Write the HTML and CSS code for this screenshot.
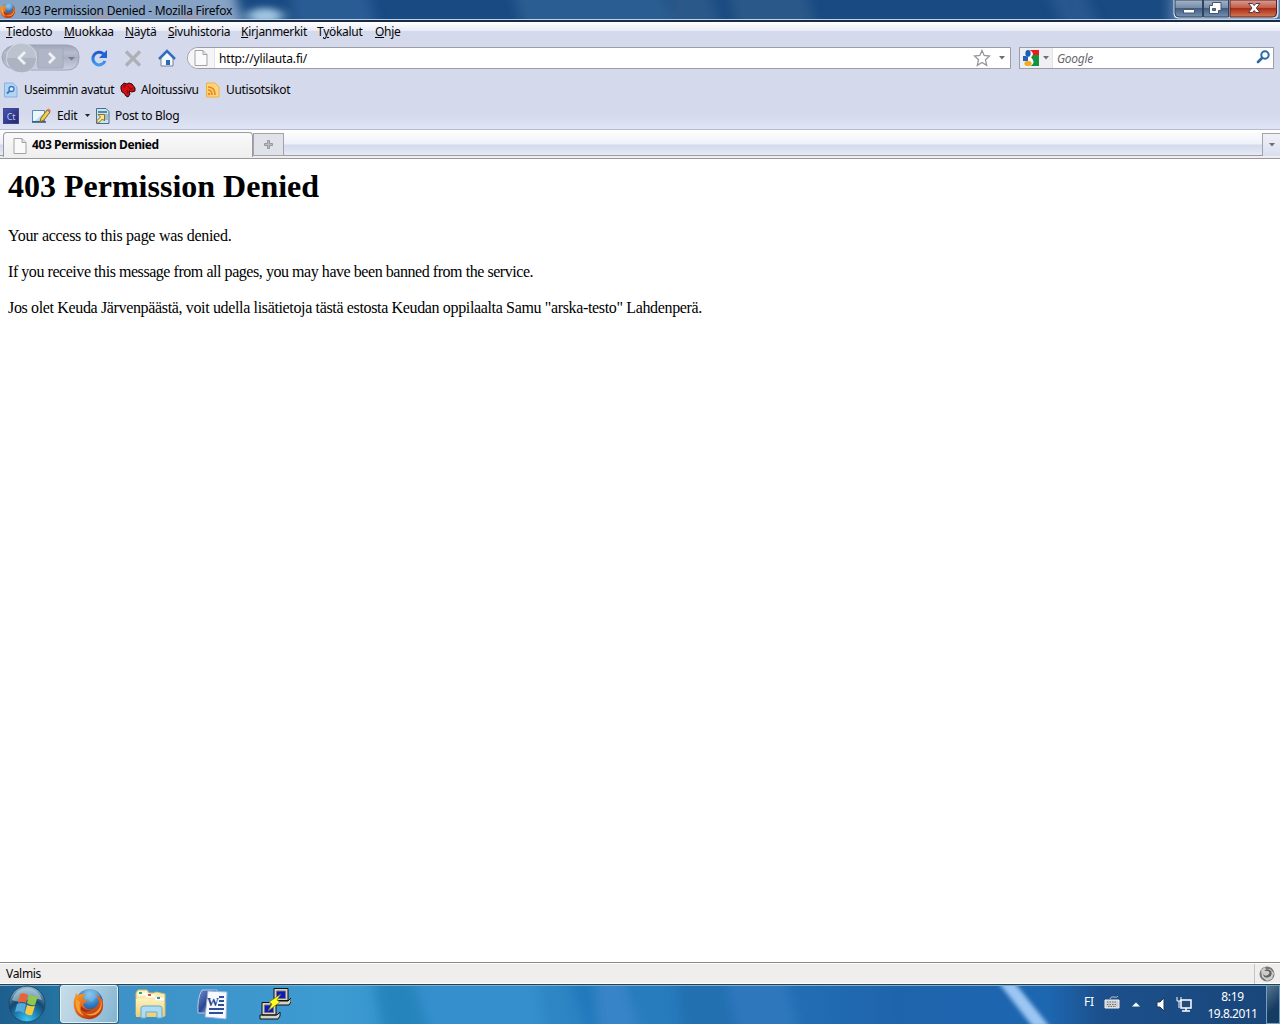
FILE: index.html
```html
<!DOCTYPE html>
<html lang="fi">
<head>
<meta charset="utf-8">
<title>403 Permission Denied - Mozilla Firefox</title>
<link rel="stylesheet" href="styles.css">
</head>
<body>
<svg width="0" height="0" class="defs">
  <defs>
    <linearGradient id="fox" x1="0" y1="0" x2="0.6" y2="1"><stop offset="0" stop-color="#f9a32b"/><stop offset=".5" stop-color="#e8681b"/><stop offset="1" stop-color="#b83510"/></linearGradient>
    <radialGradient id="globe" cx=".5" cy=".2" r=".8"><stop offset="0" stop-color="#9bd4f4"/><stop offset=".5" stop-color="#2f7cc4"/><stop offset="1" stop-color="#15346f"/></radialGradient>
    <linearGradient id="blue" x1="0" y1="0" x2="0" y2="1"><stop offset="0" stop-color="#1c5bcd"/><stop offset="1" stop-color="#3f9bf0"/></linearGradient>
    <linearGradient id="silver" x1="0" y1="0" x2="0" y2="1"><stop offset="0" stop-color="#9da5ba"/><stop offset=".3" stop-color="#b7bdce"/><stop offset=".5" stop-color="#aab1c3"/><stop offset="1" stop-color="#ccd2e2"/></linearGradient>
    <radialGradient id="orb" cx=".5" cy=".95" r=".9"><stop offset="0" stop-color="#38c8f4"/><stop offset=".4" stop-color="#1c79ac"/><stop offset=".65" stop-color="#15496f"/><stop offset="1" stop-color="#7eafc9"/></radialGradient>
    <linearGradient id="folder" x1="0" y1="0" x2="0" y2="1"><stop offset="0" stop-color="#fff3bd"/><stop offset="1" stop-color="#e9cd76"/></linearGradient>
    <linearGradient id="wave" x1="0" y1="0" x2="1" y2="1"><stop offset="0" stop-color="#7890d0"/><stop offset=".5" stop-color="#29468f"/><stop offset="1" stop-color="#d9e5fa"/></linearGradient>
    <symbol id="firefox" viewBox="0 0 32 32">
      <circle cx="16.5" cy="14.5" r="13.5" fill="url(#globe)"/>
      <path d="M13 4q5-3 10-1l4 5-5 2-3 4-4-3-3 1-2-3z" fill="#78b9e5" opacity=".5"/>
      <path d="M3 5Q4 7 6 7q3-2 7-1-4 3-3 5l4 1q0 2-4 4 2 6 7 5 5 1 9-6-1-6-4-9 5 2 6 6l1-2q3 10-2 16-5 6-13 5Q3 30 1 19 0 13 2 9z" fill="url(#fox)"/>
      <path d="M3 11Q1 24 11 28q-6-6-4-14zM27 9q3 9-3 14-5 4-12 3 8 4 14-2 5-6 1-15z" fill="#f6a033"/>
      <path d="M8 18q6 6 11 3-5 6-11 1z" fill="#a43112"/>
    </symbol>
    <symbol id="page" viewBox="0 0 14 16"><path d="M1 .5h8l4 4V15.500H1z" fill="#fafafa" stroke="#a2a2a2"/><path d="M9 .5v4h4" fill="#e4e4e4" stroke="#a2a2a2"/></symbol>
    <symbol id="arrow" viewBox="0 0 6 4"><path d="M0 0h6L3 3.500z" fill="#6d6f76"/></symbol>
  </defs>
</svg>

<header class="titlebar">
  <svg class="wallpaper" viewBox="0 0 1280 20" preserveAspectRatio="none">
    <defs><filter id="soft" x="-20%" y="-80%" width="140%" height="260%"><feGaussianBlur stdDeviation="6 3"/></filter></defs>
    <rect width="1280" height="20" fill="#194a82"/>
    <g filter="url(#soft)">
      <path d="M-30-15H232L246 35H-30z" fill="#86a3c5"/><ellipse cx="265" cy="16" rx="18" ry="8" fill="#9fc4e0"/>
      <path d="M290-15h75l15 50h-85z" fill="#2a5b94"/><path d="M510-15h150l20 50H525z" fill="#2c5d91"/><path d="M667-15h40l17 50h-47zM727-15h75l18 50h-82z" fill="#2a5988"/><path d="M1045-15h35l25 50h-40z" fill="#28578e"/><path d="M1170-15h140v50h-140z" fill="#587da8"/>
      <path d="M94 20q6-8 18 0zM182 20q8-8 18 0z" fill="#cf866b"/>
    </g>
  </svg>
  <svg class="logo-small"><use href="#firefox"/></svg>
  <span class="title">403 Permission Denied - Mozilla Firefox</span>
  <svg class="controls" viewBox="0 0 106 21">
    <defs><linearGradient id="cb" x1="0" y1="0" x2="0" y2="1"><stop offset="0" stop-color="#a6b6cb"/><stop offset=".46" stop-color="#758ca9"/><stop offset=".48" stop-color="#3f5c80"/><stop offset="1" stop-color="#7693b4"/></linearGradient><linearGradient id="cr" x1="0" y1="0" x2="0" y2="1"><stop offset="0" stop-color="#d8a092"/><stop offset=".46" stop-color="#c25b48"/><stop offset=".48" stop-color="#a82a15"/><stop offset="1" stop-color="#d47b57"/></linearGradient></defs>
    <path d="M1 0v14q0 4 4 4h97q3 0 3-4V0z" fill="#b8cadd" stroke="#dce7f2"/>
    <path d="M2 0h27.500v17H6q-4 0-4-4zM30.500 0h25v17h-25z" fill="url(#cb)" stroke="#30435e"/>
    <path d="M57 0h46.500v13q0 4-4 4H57z" fill="url(#cr)" stroke="#54232a"/>
    <path d="M10.500 9.500h11v3.500h-11z" fill="#fff" stroke="#48576d"/>
    <path d="M39.500 2.500h8.500v8h-2.500v3h-9v-8h3z" fill="#fff" stroke="#46546a"/><path d="M39.500 8.500h3v2h-3z" fill="#67809e" stroke="#46546a"/>
    <path d="M75.500 3.500h4l1.700 2 1.700-2h4l-3.500 4.500 3.500 4.500h-4l-1.700-2-1.700 2h-4L79 8z" fill="#fff" stroke="#573442"/>
  </svg>
</header>

<nav class="menubar">
  <span class="m1"><u>T</u>iedosto</span><span class="m2"><u>M</u>uokkaa</span><span class="m3"><u>N</u>äytä</span><span class="m4"><u>S</u>ivuhistoria</span><span class="m5"><u>K</u>irjanmerkit</span><span class="m6">T<u>y</u>ökalut</span><span class="m7"><u>O</u>hje</span>
</nav>

<div class="navbar">
  <svg class="navicons" viewBox="0 0 186 32">
    <path d="M20 2h47q12 1 12 12 0 13-12 13H20Q3 27 2 14 3 2 20 2z" fill="url(#silver)" stroke="#9da3b4"/>
    <path d="M38 5h25v20H38z" fill="#b0b6c5" stroke="#a1a8b8"/>
    <circle cx="21.500" cy="15" r="15" fill="#bdc2cf" stroke="#d5d9e4"/><path d="M7 15h29q-1 14-14.500 14Q8 29 7 15z" fill="#adb3c1"/>
    <path d="M25 9l-6 6 6 6M49 10l5 5-5 5" fill="none" stroke="#f0f1f5" stroke-width="2.800"/>
    <path d="M68 14h7l-3.500 3.500z" fill="#777d8c"/>
    <path d="M103.500 11A6.300 6.300 0 1 0 105 18" fill="none" stroke="url(#blue)" stroke-width="3"/><path d="M107 7v8h-8z" fill="#1d65d1"/>
    <path d="M126 8.500l14 14M140 8.500l-14 14" stroke="#aeb0b7" stroke-width="3.300"/>
    <path d="M161 15v8h12v-8l-6-6z" fill="#f3f8fd" stroke="#77839a"/><path d="M159 16l8-8 8 8" fill="none" stroke="#346dbf" stroke-width="2.500"/><path d="M166 17h4v5h-4z" fill="#2d68b8"/>
  </svg>
  <div class="address">
    <div class="siteid"><svg><use href="#page"/></svg></div>
    <span class="url">http://ylilauta.fi/</span>
    <svg class="star" viewBox="0 0 18 18"><path d="M9 1.500l2.200 5 5.300.5-4 3.800 1.200 5.500L9 13.400l-4.700 2.900 1.200-5.500-4-3.800 5.300-.5z" fill="#fff" stroke="#96969d" stroke-width="1.300"/></svg>
    <svg class="arrow"><use href="#arrow"/></svg>
  </div>
  <div class="search">
    <div class="engine"><svg class="google" viewBox="0 0 16 16"><path d="M8 0h8v5H9q0-3-2-5z" fill="#ed1c1c"/><path d="M9 5h7v11H8q4-6 0-8z" fill="#159341"/><path d="M0 6h5v5H0z" fill="#235ebd"/><path d="M8 1q4 3 0 6l1 2q4 4-2 7H4q7-3 1-5 0-3 2-4-6 0-4-4z" fill="#fff"/><ellipse cx="5" cy="3.400" rx="2.600" ry="3.400" fill="#195db9"/><ellipse cx="5" cy="13.400" rx="3.600" ry="2.600" fill="#f0ad22"/></svg><svg class="arrow"><use href="#arrow"/></svg></div>
    <span class="hint">Google</span>
    <svg class="magnifier" viewBox="0 0 14 14"><circle cx="9" cy="5" r="3.700" fill="#fff" stroke="#2d69a9" stroke-width="2"/><path d="M6 8l-4 4" stroke="#2d69a9" stroke-width="2.700" stroke-linecap="round"/></svg>
  </div>
</div>

<div class="bookmarks">
  <svg class="b-icon" viewBox="0 0 16 16"><path d="M1.500 1h8.500l4 4v10H1.500z" fill="#b2d5f4" stroke="#86b2de"/><circle cx="8.500" cy="7" r="2.500" fill="#d8edff" stroke="#3c78bd" stroke-width="1.300"/><path d="M6.700 8.900L4 11.500" stroke="#3c78bd" stroke-width="2"/></svg><span class="b1">Useimmin avatut</span>
  <svg class="b-icon" viewBox="0 0 16 16"><path d="M1 4l3-3 3 1 2-1 3 1 3 4v3l-3 1-3-1 1 3-2 3-2-1-2-3-2-1-1-3z" fill="#d90d12" stroke="#230c0b"/><path d="M3 4l3-1-2 3M8 4l2 3 3 0M7 8l1 4" fill="none" stroke="#751015"/></svg><span class="b2">Aloitussivu</span>
  <svg class="b-icon" viewBox="0 0 16 16"><path d="M1.500 1h8.500l4 4v10H1.500z" fill="#ffd57a" stroke="#efb042"/><path d="M3 5q7 0 7 8M3 8q4 0 4 5" fill="none" stroke="#e78724" stroke-width="1.700"/><circle cx="4" cy="12" r="1.300" fill="#e78724"/></svg><span class="b3">Uutisotsikot</span>
</div>

<div class="blogbar">
  <span class="ct">Ct</span>
  <svg class="edit" viewBox="0 0 20 16"><path d="M.5 2.500h12v11H.5z" fill="#e9f5ff" stroke="#5a8daf"/><path d="M3 13h9V5z" fill="#b7d9ed"/><path d="M0 14h14" stroke="#33556d" stroke-width="1.500"/><path d="M9 10l6-8 3 2-6 8-4 2z" fill="#f4cf4d" stroke="#806326"/><path d="M15 2l1.500-1.500 2.500 2L18 4z" fill="#dc7268"/></svg><span class="edit-label">Edit</span>
  <svg class="edit-arrow" viewBox="0 0 5 3"><path d="M0 0h5L2.500 3z" fill="#222"/></svg>
  <svg class="post" viewBox="0 0 16 16"><path d="M1.500.500H11l3 3v12H1.500z" fill="#cce4f2" stroke="#447187"/><path d="M3 3h9v2H3z" fill="#508ca6"/><path d="M5 7h8M5 9h8M5 11h8" stroke="#739bb0"/><path d="M3 6.500h6.500V13l-2-2-4 4-2-2 4-4z" fill="#ffe28b" stroke="#896d31"/></svg><span class="post-label">Post to Blog</span>
</div>

<div class="tabs">
  <div class="tab"><svg><use href="#page"/></svg><b>403 Permission Denied</b></div>
  <div class="newtab"><svg viewBox="0 0 9 9"><path d="M3.500.500h2v3h3v2h-3v3h-2v-3h-3v-2h3z" fill="#bbb" stroke="#96979f"/></svg></div>
  <div class="alltabs"><svg class="arrow"><use href="#arrow"/></svg></div>
</div>

<main>
  <h1>403 Permission Denied</h1>
  <p class="p1">Your access to this page was denied.</p>
  <p class="p2">If you receive this message from all pages, you may have been banned from the service.</p>
  <p class="p3">Jos olet Keuda Järvenpäästä, voit udella lisätietoja tästä estosta Keudan oppilaalta Samu "arska-testo" Lahdenperä.</p>
</main>

<div class="status"><span>Valmis</span><div class="addon"><svg viewBox="0 0 18 18"><circle cx="9" cy="9" r="7.500" fill="#777"/><path d="M3 5l4-3 1 3 4-1 4 4-2 6-5 2-5-4z" fill="#ccc"/><path d="M6 6q4-3 7 0 2 4-2 6-5 2-6-3 2 3 5 1 3-3 0-4z" fill="#606060"/></svg></div></div>

<footer class="taskbar">
  <svg class="wallpaper" viewBox="0 0 1280 38" preserveAspectRatio="none">
    <defs><linearGradient id="task" x1="0" y1="0" x2="1" y2="0"><stop offset="0" stop-color="#1d5e8d"/><stop offset=".045" stop-color="#2474a2"/><stop offset=".08" stop-color="#3e91c6"/><stop offset=".26" stop-color="#3c9bd1"/><stop offset=".5" stop-color="#287ebf"/><stop offset=".7" stop-color="#1e64ad"/><stop offset=".82" stop-color="#1d66b0"/><stop offset=".86" stop-color="#1c508c"/><stop offset="1" stop-color="#194579"/></linearGradient><filter id="beam" x="-30%" y="-10%" width="160%" height="120%"><feGaussianBlur stdDeviation="2"/></filter></defs>
    <rect width="1280" height="38" fill="url(#task)"/>
    <g filter="url(#soft)"><path d="M372-14h40l20 66h-49z" fill="#2584bd"/><path d="M415-14h120l10 66H435z" fill="#348fcd"/><path d="M565-14h70l8 66H590z" fill="#2379bd"/><path d="M594-14h28l20 66h-42z" fill="#3984c8"/><path d="M675-14h55l20 66h-66z" fill="#206fb0"/><path d="M722-14h60l18 66h-60z" fill="#2d77bd"/></g>
    <path d="M998-3h16l36 44h-17z" fill="#9cc6f3" filter="url(#beam)"/>
  </svg>
  <div class="start"><svg viewBox="0 0 38 38"><circle cx="19" cy="19" r="18" fill="url(#orb)" stroke="#234967"/><path d="M4 15q4-12 15-12t15 12q-8-3-15 0t-15 0z" fill="#d1e2ec" opacity=".5"/><path d="M12 9q4-2 8 1l-2 8q-4-2-8 0z" fill="#e76438"/><path d="M21 10q4 2 9 1l-3 9q-4 1-8-2z" fill="#8ec949"/><path d="M9 19q4-2 9 0l-2 9q-4-3-9-1z" fill="#55a7dc"/><path d="M19 20q4 2 8 1l-3 9q-4 1-7-2z" fill="#f7ca3f"/></svg></div>
  <div class="active"><svg><use href="#firefox"/></svg></div>
  <div class="app"><svg class="explorer" viewBox="0 0 34 32"><path d="M2 5l2-3h9l2 3h5l2-1 9 2v22L2 27z" fill="url(#folder)" stroke="#d6bd70"/><path d="M4 6h9M12 8h9M21 11h9" stroke="#fff" stroke-width="3"/><path d="M5 5h3" stroke="#2ca95b" stroke-width="2"/><path d="M14 7h3" stroke="#d55144" stroke-width="2"/><path d="M23 10h3" stroke="#318bc8" stroke-width="2"/><path d="M2 11q14-2 28 3v15H2z" fill="url(#folder)"/><path d="M7 30V20q0-2 3-2h15q3 0 3 2v10h-5v-6H12v6z" fill="#acddf3" stroke="#6da9c5"/></svg></div>
  <div class="app"><svg class="word" viewBox="0 0 32 32"><path d="M5 2h15v23H1Q0 10 5 2z" fill="url(#wave)" stroke="#b6c9ed"/><path d="M11 3l19 1-1 27-21-2z" fill="#f6f9ff" stroke="#9eb3d7"/><path d="M22 9h5M22 13h5M21 17h6M12 21h15M12 25h14" stroke="#304f99" stroke-width="2"/><text x="10" y="18">W</text></svg></div>
  <div class="app"><svg class="putty" viewBox="0 0 32 32"><g stroke="#111" fill="#d3d3c9"><path d="M15 .5h14v12H15zM12 13h17l3-3v4l-2 3H12zM3 14.500h14V27H3zM1 27h17l3-3v4l-2 3H1z"/></g><path d="M17.500 3h9v7.500h-9zM5.500 17h9v7.500h-9z" fill="#1118bd" stroke="#777"/><path d="M22 6l-12 8 3 2-4 7 12-9-3-2z" fill="#ffff21" stroke="#77751d" stroke-width=".7"/></svg></div>
  <div class="tray"><span class="lang">FI</span><svg viewBox="0 0 88 24"><path d="M1 8h14v8H1z" fill="#cfd2d4" stroke="#f0f0f0"/><path d="M3 10h10M3 12.500h10M4 14.500h8" stroke="#6f7478" stroke-dasharray="1.500 1"/><path d="M6 7q1-3 4-2t4-1" fill="none" stroke="#bcc4cb"/><path d="M28 14.500l4-4 4 4z" fill="#fff"/><path d="M53 10h3l4-4v13l-4-4h-3z" fill="#fff" stroke="#23384f"/><path d="M77 8h10v8H77zM82 16v3M78 19h8" fill="#214c7b" stroke="#fff" stroke-width="1.500"/><path d="M73 5v4h4V5M75 9v7" fill="none" stroke="#fff"/></svg></div>
  <div class="clock"><time>8:19</time><time class="date">19.8.2011</time></div>
  <div class="desktop"></div>
</footer>
</body>
</html>
```
FILE: styles.css
```css
* { box-sizing: border-box; }
body { margin: 0; width: 1280px; height: 1024px; overflow: hidden; display: flex; flex-direction: column; background: #fff; font: 12px/16px "Noto Sans", sans-serif; letter-spacing: -.3px; color: #050507; }
svg { display: block; flex: none; }
.defs { position: absolute; }
span, b, time { white-space: nowrap; flex: none; }
.titlebar { position: relative; height: 22px; display: flex; align-items: flex-start; border-bottom: 2px solid #182c4a; box-shadow: inset 0 -1px #c0d1e5; }
.wallpaper { position: absolute; left: 0; top: 0; width: 100%; height: 100%; z-index: -1; }
.titlebar .wallpaper { height: 20px; }
.logo-small { width: 16px; height: 17px; margin-top: 2px; }
.title { margin: 3px 0 0 5px; letter-spacing: -.25px; }
.controls { width: 106px; height: 21px; margin-left: auto; margin-right: 1px; }
.menubar { height: 21px; padding: 2px 0 0 6px; display: flex; background: linear-gradient(#fff, #e7ebf5 9px, #d4daec 9px); }
.m1 { width: 58px; }
.m2 { width: 61px; }
.m3 { width: 43px; }
.m4 { width: 73px; }
.m5 { width: 76px; }
.m6 { width: 58px; }
.navbar { height: 33px; display: flex; align-items: flex-start; background: #d4d9ec; }
.navicons { width: 186px; height: 32px; }
.address { width: 824px; height: 22px; margin: 4px 0 0 1px; display: flex; align-items: center; border: 1px solid #9c9da7; border-radius: 11px 0 0 11px; background: #fff; }
.siteid { width: 27px; height: 20px; padding: 2px 0 0 6px; background: #f5f5f8; border-right: 1px solid #e1e1e7; border-radius: 10px 0 0 10px; }
.siteid svg { width: 14px; height: 16px; }
.url { margin: 2px 0 0 4px; letter-spacing: -.16px; }
.star { width: 18px; height: 18px; margin-left: auto; }
.arrow { width: 6px; height: 4px; }
.address .arrow { margin: 1px 5px 0 8px; }
.search { width: 255px; height: 22px; margin: 4px 0 0 8px; display: flex; align-items: center; border: 1px solid #9c9da7; background: #fff; }
.engine { width: 33px; height: 20px; padding-left: 3px; display: flex; align-items: center; gap: 4px; background: #f0f0f4; border-right: 1px solid #e1e1e7; }
.google { width: 16px; height: 16px; }
.hint { margin: 2px 0 0 4px; color: #686870; font-style: italic; }
.magnifier { width: 14px; height: 14px; margin: -1px 3px 0 auto; }
.bookmarks { height: 26px; padding: 1px 0 0 3px; display: flex; align-items: center; background: #d4d9ec; }
.b-icon { width: 16px; height: 16px; }
.b1 { width: 100px; padding-left: 5px; letter-spacing: -.4px; }
.b1 + svg { margin-left: 1px; }
.b2 { width: 68px; padding-left: 5px; }
.b2 + svg { margin-left: 1px; }
.b3 { padding-left: 5px; }
.blogbar { height: 28px; padding: 0 0 0 3px; display: flex; align-items: center; border-bottom: 1px solid #b7bcd1; background: linear-gradient(#d4d9ec 45%, #e0e5f5); }
.ct { width: 16px; height: 16px; font-size: 9px; line-height: 15px; text-align: center; color: #b9cbff; background: linear-gradient(135deg, #4954ac, #23286f); border: 1px solid #3d4596; }
.edit { width: 20px; height: 16px; margin-left: 13px; }
.edit-label { width: 28px; margin-left: 5px; }
.edit-arrow { width: 5px; height: 3px; }
.post { width: 16px; height: 16px; margin-left: 5px; }
.post-label { margin-left: 4px; }
.tabs { height: 29px; padding: 2px 0 2px 3px; display: flex; position: relative; background: linear-gradient(#fff, #edf1f8 14px, #d4daec 15px, #e5eaf6 25px, #9b9ca3 25px, #9b9ca3 26px, #eeeef0 26px, #eeeef0 28px, #999 28px); }
.tab { width: 250px; height: 25px; display: flex; align-items: center; border: 1px solid #9b9ca3; border-bottom: 0; border-radius: 4px 4px 0 0; background: linear-gradient(#fafafa, #eee); }
.tab svg { width: 14px; height: 16px; margin: 1px 5px 0 9px; }
.tab b { font-size: 12px; letter-spacing: -.4px; }
.newtab { width: 31px; height: 23px; display: flex; align-items: center; justify-content: center; border: 1px solid #a1a2ac; background: #e0e2e9; margin-top: 1px; }
.newtab svg { width: 9px; height: 9px; }
.alltabs { width: 18px; height: 23px; margin: 1px 0 0 auto; padding-left: 6px; display: flex; align-items: center; border: 1px solid #a1a2ac; border-width: 1px 0 0 1px; background: linear-gradient(#f0f1f7, #d9dfef); }
.blogbar { height: 28px; }
main { flex: none; height: 803px; padding: 0 8px; font: 16px/18px "Liberation Serif", serif; letter-spacing: 0; color: #000; }
h1 { margin: 10px 0 23px; font-size: 32px; line-height: 35px; }
p { margin: 0 0 18px; white-space: nowrap; }
.p1 { letter-spacing: -.28px; }
.p2 { letter-spacing: -.45px; }
.p3 { letter-spacing: -.35px; }
.menubar + .navbar { height: 34px; }
.status { height: 22px; display: flex; align-items: center; justify-content: space-between; padding-left: 6px; border-top: 1px solid #898989; box-shadow: inset 0 1px #fff, inset 0 -1px #fff; background: #f0eded; }
.addon { width: 26px; height: 20px; padding: 1px 0 0 3px; border-left: 1px solid #c5c3c3; }
.addon svg { width: 18px; height: 18px; }
.taskbar { position: relative; height: 40px; display: flex; border-top: 1px solid #244453; box-shadow: inset 0 1px #7db0d0; color: #fff; }
.start { width: 60px; padding: 0 0 0 8px; }
.start svg { width: 38px; height: 38px; }
.active { width: 58px; height: 38px; padding: 1px 0 0 12px; border: 1px solid #e1f1fa; border-radius: 3px; background: linear-gradient(110deg, #c7dce8, #b7d2e2 35%, #82b4d1); box-shadow: 0 0 0 1px #315f77; }
.active svg { width: 32px; height: 34px; }
.active + .app { margin-left: 2px; }
.app { width: 62px; display: flex; justify-content: center; align-items: center; padding-bottom: 1px; }
.explorer { width: 34px; height: 32px; }
.word { width: 32px; height: 32px; }
.word text { font: bold 12px "Liberation Serif", serif; letter-spacing: 0; fill: #29478d; }
.putty { width: 32px; height: 32px; }
.tray { margin-left: auto; margin-right: 7px; display: flex; padding-top: 7px; }
.tray svg { width: 88px; height: 24px; }
.lang { width: 20px; padding-top: 2px; }
.clock { width: 67px; height: 39px; padding-top: 3px; display: flex; flex-direction: column; align-items: center; line-height: 17px; }
.date { letter-spacing: -.5px; }
.desktop { width: 14px; height: 39px; border: 1px solid #74a0bd; background: linear-gradient(135deg, #54768f, #173c63 60%); }
```
